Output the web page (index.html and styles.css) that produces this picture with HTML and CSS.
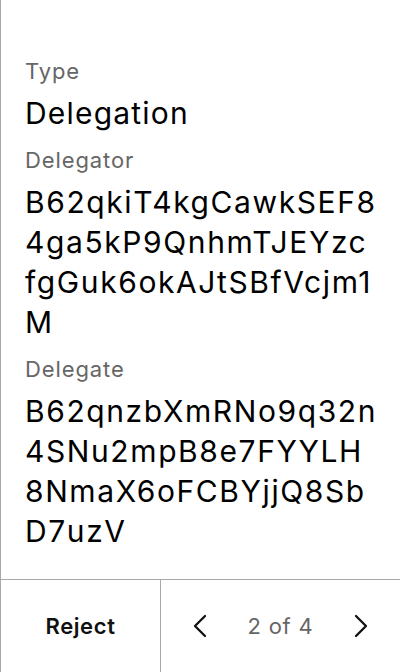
FILE: index.html
```html
<!DOCTYPE html>
<html>
<head>
<meta charset="utf-8">
<link rel="stylesheet" href="styles.css">
</head>
<body>
<div class="screen">
  <div class="content">
    <div class="label">Type</div>
    <div class="value">Delegation</div>
    <div class="label">Delegator</div>
    <div class="value addr">B62qkiT4kgCawkSEF8<br>4ga5kP9QnhmTJEYzc<br>fgGuk6okAJtSBfVcjm1<br>M</div>
    <div class="label">Delegate</div>
    <div class="value addr">B62qnzbXmRNo9q32n<br>4SNu2mpB8e7FYYLH<br>8NmaX6oFCBYjjQ8Sb<br>D7uzV</div>
  </div>
  <div class="footer">
    <div class="reject">Reject</div>
    <div class="pager">
      <svg class="chev" width="16" height="24" viewBox="0 0 16 24"><path d="M13 2 L3 12 L13 22" fill="none" stroke="#111" stroke-width="2.3" stroke-linecap="round" stroke-linejoin="round"/></svg>
      <span class="count">2 of 4</span>
      <svg class="chev" width="16" height="24" viewBox="0 0 16 24"><path d="M3 2 L13 12 L3 22" fill="none" stroke="#111" stroke-width="2.3" stroke-linecap="round" stroke-linejoin="round"/></svg>
    </div>
  </div>
</div>
</body>
</html>
```
FILE: styles.css
```css
html, body { margin: 0; padding: 0; background: #fff; }
body { font-family: Inter, "Noto Sans", sans-serif; color: #000; }
.screen {
  width: 400px; height: 672px; box-sizing: border-box;
  border-left: 1px solid #a8a8a8;
  display: flex; flex-direction: column;
}
.content { flex: 1; padding: 57px 8px 0 24px; }
.label { font-size: 22px; line-height: 28px; color: #666; letter-spacing: 0.9px; margin-bottom: 8px; }
.value { font-size: 30px; line-height: 40px; letter-spacing: 1.2px; margin-bottom: 13px; }
.addr { letter-spacing: 1.6px; white-space: nowrap; }
.footer {
  height: 92px; border-top: 1px solid #a8a8a8;
  display: flex;
}
.reject {
  width: 159px; border-right: 1px solid #a8a8a8;
  display: flex; align-items: center; justify-content: center;
  font-size: 22px; font-weight: 600; letter-spacing: 0.6px; color: #111;
}
.pager {
  flex: 1; display: flex; align-items: center; justify-content: space-between;
  padding: 0 31px 0 31px;
}
.count { font-size: 22px; color: #666; letter-spacing: 0.8px; }
```
